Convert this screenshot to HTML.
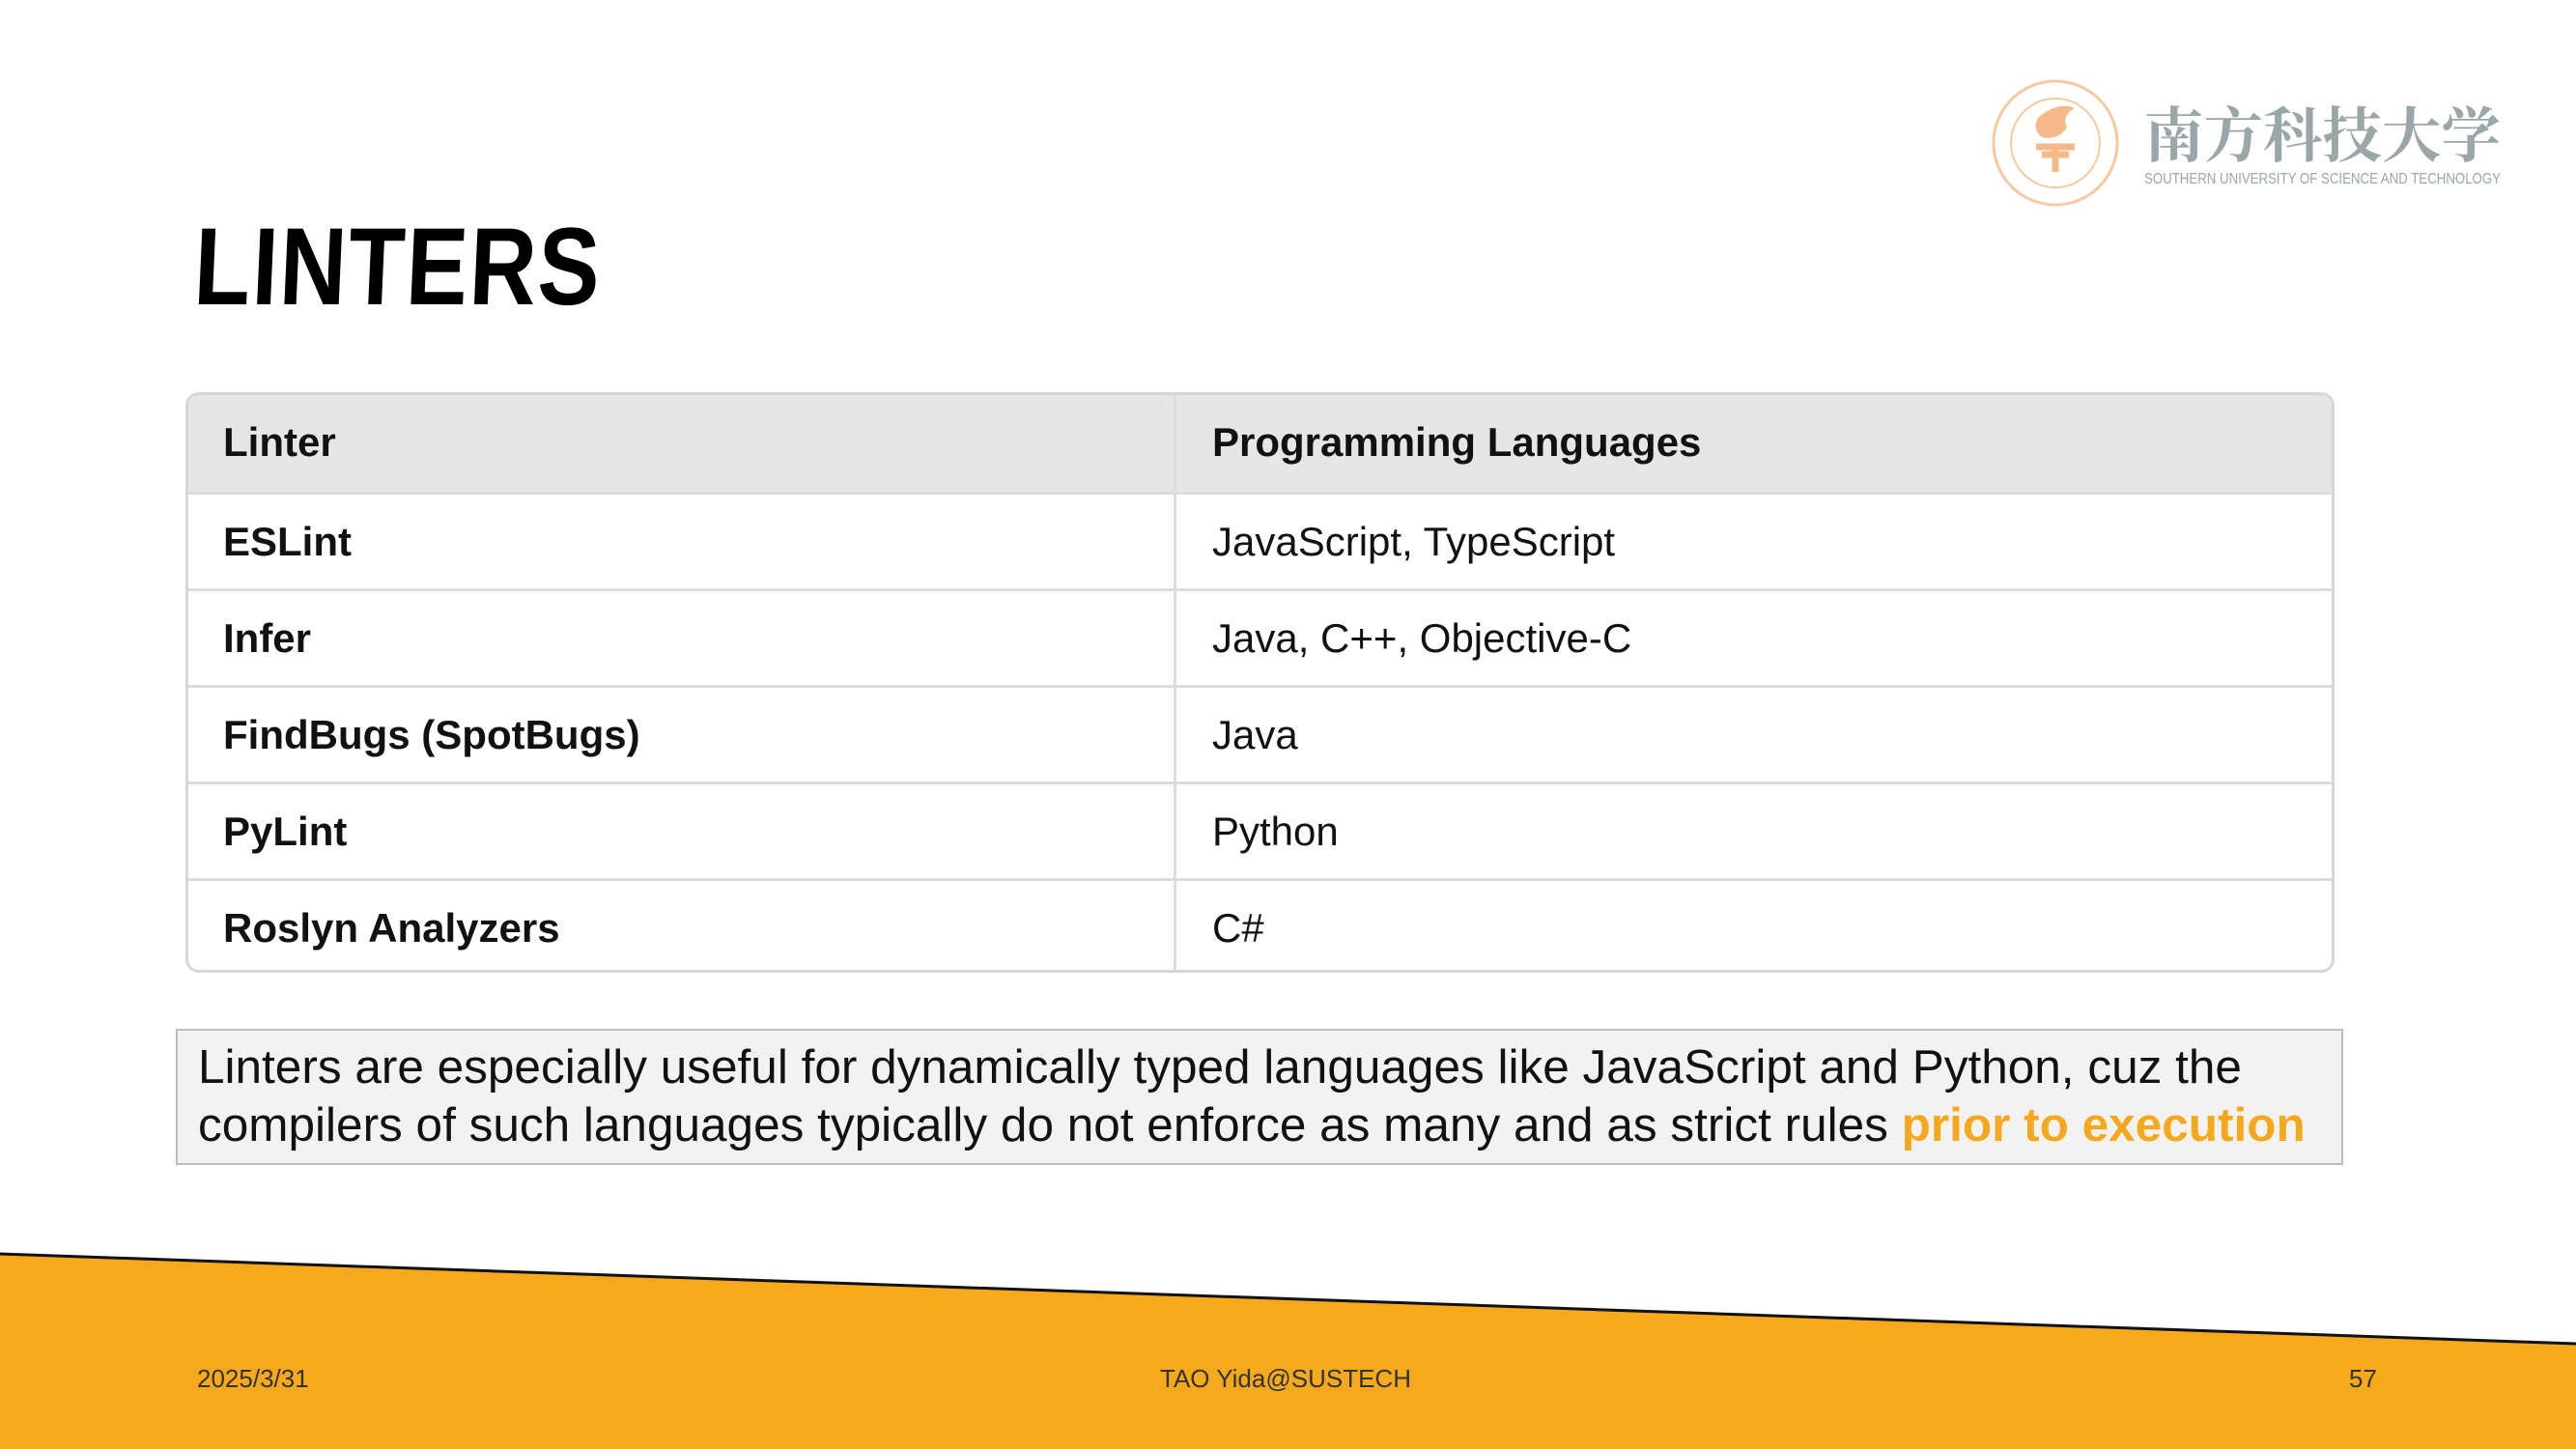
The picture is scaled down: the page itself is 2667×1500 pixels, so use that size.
<!DOCTYPE html>
<html><head><meta charset="utf-8"><style>
*{margin:0;padding:0;box-sizing:border-box}
body{width:2667px;height:1500px;background:#fff;position:relative;overflow:hidden;font-family:"Liberation Sans",sans-serif}
.title{position:absolute;left:204px;top:214px;font-size:114px;font-weight:900;letter-spacing:2px;transform:scaleX(0.84) skewX(-3deg);transform-origin:left top;color:#000;line-height:1.1}
.tbl{position:absolute;left:192px;top:406px;width:2225px;height:601px;border:3px solid #d6d6d6;border-radius:14px;overflow:hidden}
.row{position:absolute;left:0;width:100%;height:100px;border-top:3px solid #dcdcdc;font-size:42px;color:#111}
.row div{position:absolute;top:0;line-height:97px}
.c1{left:36px;font-weight:bold}
.c2{left:1060px}
.vl{position:absolute;left:1020px;top:0;bottom:0;width:3px;background:#dcdcdc}
.note{position:absolute;left:182px;top:1065px;width:2244px;height:141px;background:#f2f2f2;border:2px solid #bdbdbd;font-size:49.5px;line-height:60px;padding:8px 0 0 21px;color:#111}
.foot{position:absolute;top:1412px;font-size:26px;color:#333}
</style></head><body>
<div class="title">LINTERS</div>
<div class="tbl">
<div class="row" style="top:0;border-top:none;background:#e6e6e6;height:100px"><div class="c1">Linter</div><div class="c2" style="font-weight:bold">Programming Languages</div></div>
<div class="row" style="top:100px"><div class="c1">ESLint</div><div class="c2">JavaScript, TypeScript</div></div>
<div class="row" style="top:200px"><div class="c1">Infer</div><div class="c2">Java, C++, Objective-C</div></div>
<div class="row" style="top:300px"><div class="c1">FindBugs (SpotBugs)</div><div class="c2">Java</div></div>
<div class="row" style="top:400px"><div class="c1">PyLint</div><div class="c2">Python</div></div>
<div class="row" style="top:500px"><div class="c1">Roslyn Analyzers</div><div class="c2">C#</div></div>
<div class="vl"></div>
</div>
<div class="note">Linters are especially useful for dynamically typed languages like JavaScript and Python, cuz the compilers of such languages typically do not enforce as many and as strict rules <span style="color:#f5a81c;font-weight:bold">prior to execution</span></div>
<svg style="position:absolute;left:0;top:0" width="2667" height="1500">
<polygon points="0,1298 2667,1391 2667,1500 0,1500" fill="#f6a91d"/>
<line x1="0" y1="1298" x2="2667" y2="1391" stroke="#111" stroke-width="3"/>
<circle cx="2128" cy="148" r="64" fill="none" stroke="#f6c9a0" stroke-width="3"/>
<circle cx="2128" cy="148" r="46" fill="none" stroke="#f6c9a0" stroke-width="2"/>
<path d="M2112 120 q20 -15 36 -8 q-14 8 -8 20 q-10 14 -26 10 q-12 -10 -2 -22z" fill="#f6b98a"/>
<path d="M2108 152 h40 M2114 160 h28 M2128 152 v26" stroke="#f6b98a" stroke-width="7"/>
<text x="2220" y="162" textLength="369" lengthAdjust="spacingAndGlyphs" font-family="Noto Serif CJK SC,serif" font-size="62" fill="#9aa7a8" font-weight="bold">南方科技大学</text>
<text x="2220" y="190" textLength="369" lengthAdjust="spacingAndGlyphs" font-family="Liberation Sans,sans-serif" font-size="16" fill="#9aa7a8">SOUTHERN UNIVERSITY OF SCIENCE AND TECHNOLOGY</text>
</svg>
<div class="foot" style="left:204px">2025/3/31</div>
<div class="foot" style="left:1201px">TAO Yida@SUSTECH</div>
<div class="foot" style="left:2432px">57</div>
</body></html>
